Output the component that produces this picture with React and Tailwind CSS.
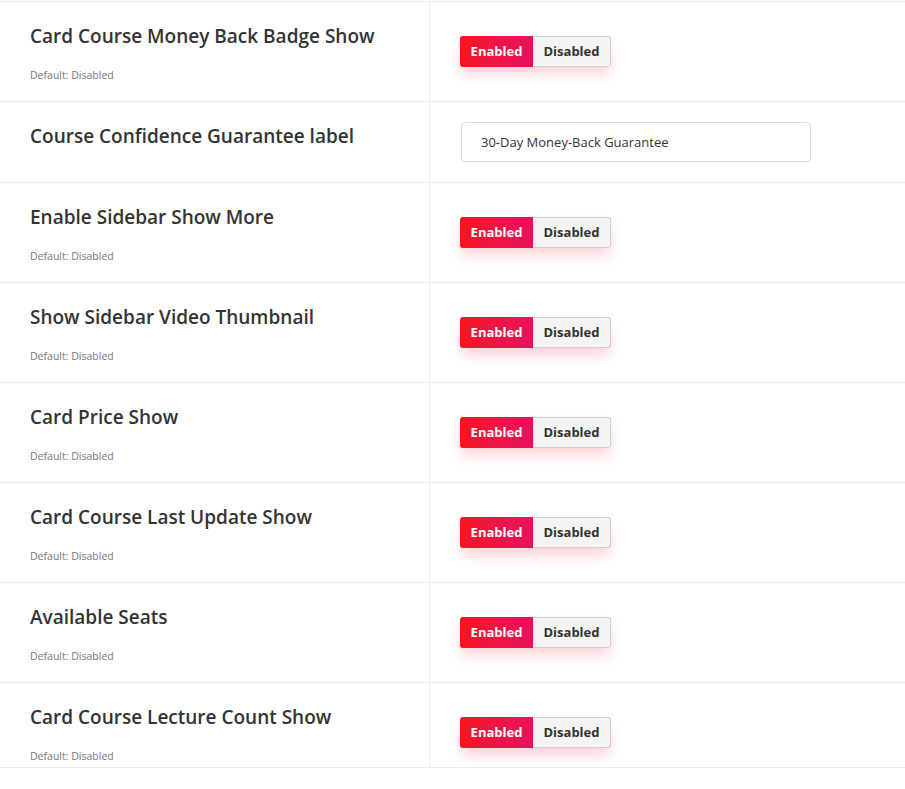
import React, { useState } from 'react';

const settings = [
  { id: 'money_back_badge', title: 'Card Course Money Back Badge Show', type: 'toggle' },
  { id: 'confidence_label', title: 'Course Confidence Guarantee label', type: 'text', value: '30-Day Money-Back Guarantee' },
  { id: 'sidebar_show_more', title: 'Enable Sidebar Show More', type: 'toggle' },
  { id: 'sidebar_video_thumb', title: 'Show Sidebar Video Thumbnail', type: 'toggle' },
  { id: 'card_price', title: 'Card Price Show', type: 'toggle' },
  { id: 'last_update', title: 'Card Course Last Update Show', type: 'toggle' },
  { id: 'available_seats', title: 'Available Seats', type: 'toggle' },
  { id: 'lecture_count', title: 'Card Course Lecture Count Show', type: 'toggle' },
];

const Toggle = ({ value, onChange }) => (
  <div className="inline-flex h-[31px] rounded-[3px] shadow-[0_8px_14px_-2px_rgba(245,20,40,0.22)]">
    <button
      onClick={() => onChange(true)}
      className={`w-[73px] rounded-l-[3px] text-[13px] font-bold ${
        value ? 'bg-gradient-to-r from-[#f7141c] to-[#e8105e] text-white' : 'border border-r-0 border-[#cfcfcf] bg-[#f5f5f5] text-[#333]'
      }`}
    >
      Enabled
    </button>
    <button
      onClick={() => onChange(false)}
      className={`w-[78px] rounded-r-[3px] text-[13px] font-bold ${
        !value ? 'bg-gradient-to-r from-[#f7141c] to-[#e8105e] text-white' : 'border border-l-0 border-[#cfcfcf] bg-[#f5f5f5] text-[#333]'
      }`}
    >
      Disabled
    </button>
  </div>
);

const App = () => {
  const [values, setValues] = useState(() => {
    const init = {};
    settings.forEach((s) => {
      init[s.id] = s.type === 'toggle' ? true : s.value;
    });
    return init;
  });

  const update = (id, val) => setValues((prev) => ({ ...prev, [id]: val }));

  return (
    <div className="min-h-screen bg-white pt-px font-['Open_Sans','Noto_Sans',sans-serif] text-[#333]">
      {settings.map((s, i) => {
        const last = i === settings.length - 1;
        return (
          <div key={s.id} className="flex border-t border-[#ececec] last:border-b">
            <div className={`w-[430px] border-r border-[#ececec] px-[30px] pt-[21px] ${s.type === 'text' ? 'pb-[33px]' : last ? 'pb-[3px]' : 'pb-[18px]'}`}>
              <h4 className="text-[19px] font-semibold leading-[26px] text-[#333]">{s.title}</h4>
              {s.type === 'toggle' && (
                <p className="mt-[18px] text-[10.5px] leading-[16px] text-[#777]">Default: Disabled</p>
              )}
            </div>
            <div className={`flex-1 pl-[30px] ${s.type === 'text' ? 'pt-[20px]' : 'pt-[34px]'}`}>
              {s.type === 'toggle' ? (
                <Toggle value={values[s.id]} onChange={(v) => update(s.id, v)} />
              ) : (
                <input
                  type="text"
                  value={values[s.id]}
                  onChange={(e) => update(s.id, e.target.value)}
                  className="ml-px h-[40px] w-[350px] rounded-[4px] border border-[#dcdcdc] px-[19px] text-[13px] text-[#333] outline-none"
                />
              )}
            </div>
          </div>
        );
      })}
    </div>
  );
};

export default App;
